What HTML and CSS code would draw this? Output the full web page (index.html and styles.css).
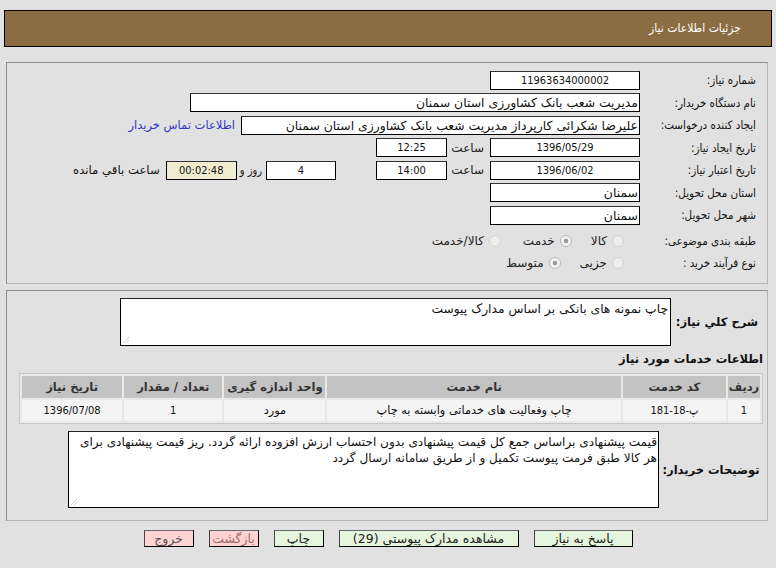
FILE: index.html
```html
<!DOCTYPE html>
<html lang="fa" dir="rtl">
<head>
<meta charset="utf-8">
<title>جزئیات اطلاعات نیاز</title>
<link rel="stylesheet" href="styles.css">
</head>
<body>
<div class="header">جزئیات اطلاعات نیاز</div>

<div class="section s1">
  <div class="row">
    <div class="lbl">شماره نیاز:</div>
    <div class="box w150 c num">11963634000002</div>
  </div>
  <div class="row">
    <div class="lbl">نام دستگاه خریدار:</div>
    <div class="box w450">مدیریت شعب بانک کشاورزی استان سمنان</div>
  </div>
  <div class="row">
    <div class="lbl">ایجاد کننده درخواست:</div>
    <div class="box w399">علیرضا شکرائی کارپرداز مدیریت شعب بانک کشاورزی استان سمنان</div>
    <a class="link" href="#">اطلاعات تماس خریدار</a>
  </div>
  <div class="row">
    <div class="lbl">تاریخ ایجاد نیاز:</div>
    <div class="box w150 c num">1396/05/29</div>
    <div class="sa">ساعت</div>
    <div class="box w71 c num">12:25</div>
  </div>
  <div class="row">
    <div class="lbl">تاریخ اعتبار نیاز:</div>
    <div class="box w150 c num">1396/06/02</div>
    <div class="sa">ساعت</div>
    <div class="box w71 c num">14:00</div>
    <div class="box w70 c num days">4</div>
    <div class="rooz">روز و</div>
    <div class="box w71 c num remain">00:02:48</div>
    <div class="txt">ساعت باقي مانده</div>
  </div>
  <div class="row">
    <div class="lbl">استان محل تحویل:</div>
    <div class="box w150">سمنان</div>
  </div>
  <div class="row">
    <div class="lbl">شهر محل تحویل:</div>
    <div class="box w150">سمنان</div>
  </div>
  <div class="rrow first">
    <div class="lbl">طبقه بندی موضوعی:</div>
    <div class="radios">
      <div class="opt"><span class="radio"></span><span>کالا</span></div>
      <div class="opt o2"><span class="radio on"></span><span>خدمت</span></div>
      <div class="opt"><span class="radio"></span><span>کالا/خدمت</span></div>
    </div>
  </div>
  <div class="rrow">
    <div class="lbl">نوع فرآیند خرید :</div>
    <div class="radios">
      <div class="opt"><span class="radio"></span><span>جزیی</span></div>
      <div class="opt"><span class="radio on"></span><span>متوسط</span></div>
    </div>
  </div>
</div>

<div class="section s2">
  <div class="trow">
    <div class="blbl l1">شرح کلي نياز:</div>
    <div class="ta ta1">چاپ نمونه های بانکی بر اساس مدارک پیوست<span class="grip"></span></div>
  </div>
  <div class="title">اطلاعات خدمات مورد نیاز</div>
  <table class="grid">
    <thead>
      <tr>
        <th class="c1">ردیف</th>
        <th class="c2">کد خدمت</th>
        <th class="c3">نام خدمت</th>
        <th class="c4">واحد اندازه گیری</th>
        <th class="c5">تعداد / مقدار</th>
        <th class="c6">تاریخ نیاز</th>
      </tr>
    </thead>
    <tbody>
      <tr>
        <td>1</td>
        <td>پ-18-181</td>
        <td class="fa">چاپ وفعالیت های خدماتی وابسته به چاپ</td>
        <td class="fa">مورد</td>
        <td>1</td>
        <td>1396/07/08</td>
      </tr>
    </tbody>
  </table>
  <div class="trow t2">
    <div class="blbl l2">توضیحات خریدار:</div>
    <div class="ta ta2">قیمت پیشنهادی براساس جمع کل قیمت پیشنهادی بدون احتساب ارزش افزوده ارائه گردد. ریز قیمت پیشنهادی برای<br>هر کالا طبق فرمت پیوست تکمیل و از طریق سامانه ارسال گردد<span class="grip"></span></div>
  </div>
</div>

<div class="buttons">
  <button class="btn green b1" type="button">پاسخ به نیاز</button>
  <button class="btn green b2" type="button">مشاهده مدارک پیوستی (29)</button>
  <button class="btn green b3" type="button">چاپ</button>
  <button class="btn pink b3 back" type="button">بازگشت</button>
  <button class="btn pink b3" type="button">خروج</button>
</div>
</body>
</html>
```

FILE: styles.css
```css
* { box-sizing: border-box; }

html, body {
  margin: 0;
  padding: 0;
}

body {
  width: 776px;
  height: 568px;
  overflow: hidden;
  background: #e1e1e1;
  color: #111;
  font-family: "DejaVu Sans Condensed", "DejaVu Sans", sans-serif;
  font-size: 11px;
}

.header {
  margin: 10px 4px 0 4px;
  height: 37px;
  border: 1px solid #000;
  background: #8b6d43;
  color: #fff;
  padding-right: 30px;
  line-height: 35px;
  font-size: 12px;
}

.section {
  margin: 0 8px 0 6px;
  border: 1px solid #8c8c8c;
  border-right-color: #b4b4b4;
  border-bottom-color: #b4b4b4;
}

.s1 {
  margin-top: 15px;
  height: 222px;
  padding: 6px 11px 0 0;
}

.row {
  display: flex;
  align-items: center;
  height: 22.5px;
}

.rrow {
  display: flex;
  align-items: center;
  height: 22px;
}

.rrow.first { margin-top: 3px; }

.lbl {
  width: 116px;
  flex: none;
  white-space: nowrap;
  font-size: 11.5px;
}

.box {
  flex: none;
  height: 19px;
  line-height: 17px;
  border: 1px solid #000;
  border-top-color: #333;
  background: #fff;
  padding: 0 1px;
  white-space: nowrap;
  overflow: hidden;
  font-family: "DejaVu Sans", sans-serif;
  font-size: 12.4px;
}

.box.num {
  font-family: "DejaVu Sans Condensed", "DejaVu Sans", sans-serif;
  font-size: 11px;
}

.box.c { text-align: center; }
.w150 { width: 150px; }
.w450 { width: 450px; }
.w399 { width: 399px; }
.w71 { width: 71px; }
.w70 { width: 70px; }

.remain { background: #efecd0; }

.sa {
  width: 43px;
  flex: none;
  padding-right: 6px;
  color: #222;
  font-family: "DejaVu Sans", sans-serif;
  font-size: 12px;
}

.days { margin-right: 40px; }

.rooz {
  flex: none;
  white-space: nowrap;
  padding: 0 4px 0 3px;
}

.txt {
  flex: none;
  white-space: nowrap;
  padding-right: 6px;
  font-family: "DejaVu Sans", sans-serif;
  font-size: 11.7px;
}

.link {
  color: #3434c4;
  text-decoration: none;
  margin-right: 6px;
  white-space: nowrap;
  font-family: "DejaVu Sans", sans-serif;
  font-size: 11.5px;
}

.radios {
  display: flex;
  align-items: center;
  padding-right: 16px;
}

.opt {
  display: flex;
  align-items: center;
  gap: 5px;
  margin-left: 19px;
  color: #222;
  font-family: "DejaVu Sans", sans-serif;
  font-size: 12px;
}

.opt.o2 { margin-left: 22px; }

.radio {
  width: 12px;
  height: 12px;
  border-radius: 50%;
  border: 1px solid #d2d2d2;
  background: #ededed;
  flex: none;
}

.radio.on {
  border-color: #b8b8b8;
  background: radial-gradient(circle, #9a9a9a 0 2px, #f2f2f2 2.6px);
}

.s2 {
  margin-top: 6px;
  height: 231px;
  padding: 7px 4px 0 0;
}

.trow {
  display: flex;
  align-items: center;
}

.blbl {
  flex: none;
  font-family: "DejaVu Sans", sans-serif;
  font-weight: bold;
  font-size: 11.5px;
  color: #111;
  white-space: nowrap;
  text-align: center;
}

.l1 { width: 92px; }
.l2 { width: 104px; }

.ta {
  position: relative;
  flex: none;
  background: #fff;
  border: 1px solid #000;
  border-top-color: #222;
  padding: 2px 2px;
  line-height: 16px;
  font-family: "DejaVu Sans", sans-serif;
  font-size: 12.3px;
}

.ta1 { width: 551px; height: 48px; }
.ta2 {
  width: 591px;
  height: 77px;
  white-space: nowrap;
  overflow: hidden;
  padding: 2px 1px;
  font-size: 12.1px;
}

.grip {
  position: absolute;
  left: 2px;
  bottom: 2px;
  width: 6px;
  height: 6px;
  background:
    linear-gradient(135deg, transparent 0 45%, #d0d0d0 45% 55%, transparent 55%),
    linear-gradient(135deg, transparent 0 70%, #d0d0d0 70% 80%, transparent 80%);
}

.title {
  margin-top: 4px;
  height: 18px;
  line-height: 18px;
  font-family: "DejaVu Sans", sans-serif;
  font-weight: bold;
  font-size: 11.5px;
}

.grid {
  margin-top: 5px;
  margin-right: 0;
  margin-left: 12px;
  width: 744px;
  border: 1px solid #c6c6c6;
  border-spacing: 2px;
  background: #e9e9e9;
  table-layout: fixed;
}

.grid th {
  height: 22px;
  background: #c3c3c3;
  color: #333;
  font-family: "DejaVu Sans", sans-serif;
  font-weight: bold;
  font-size: 11.5px;
  padding: 0;
  text-align: center;
}

.grid td {
  height: 21px;
  background: #f4f4f4;
  color: #111;
  padding: 0;
  text-align: center;
}

.grid td.fa {
  font-family: "DejaVu Sans", sans-serif;
  font-size: 11.3px;
}

.grid th.c1 { width: 32px; }
.grid th.c2 { width: 103px; }
.grid th.c3 { width: 293px; }
.grid th.c4 { width: 101px; }
.grid th.c5 { width: 98px; }
.grid th.c6 { width: 100px; }

.t2 { margin-top: 7px; }

.buttons {
  display: flex;
  justify-content: center;
  gap: 15px;
  margin-top: 9px;
}

.btn {
  height: 17px;
  padding: 0;
  margin: 0;
  font-family: "DejaVu Sans", sans-serif;
  font-size: 12.5px;
  line-height: 15px;
  color: #222;
  border: 1px solid #000;
  border-top-color: #666;
  border-left-color: #444;
  border-radius: 0;
  white-space: nowrap;
  overflow: hidden;
}

.green { background: #e6f6de; }
.pink { background: #ffd3d3; color: #555; }
.back { color: #a46a6a; }

.b1 { width: 99px; }
.b2 { width: 180px; }
.b3 { width: 50px; }
```
